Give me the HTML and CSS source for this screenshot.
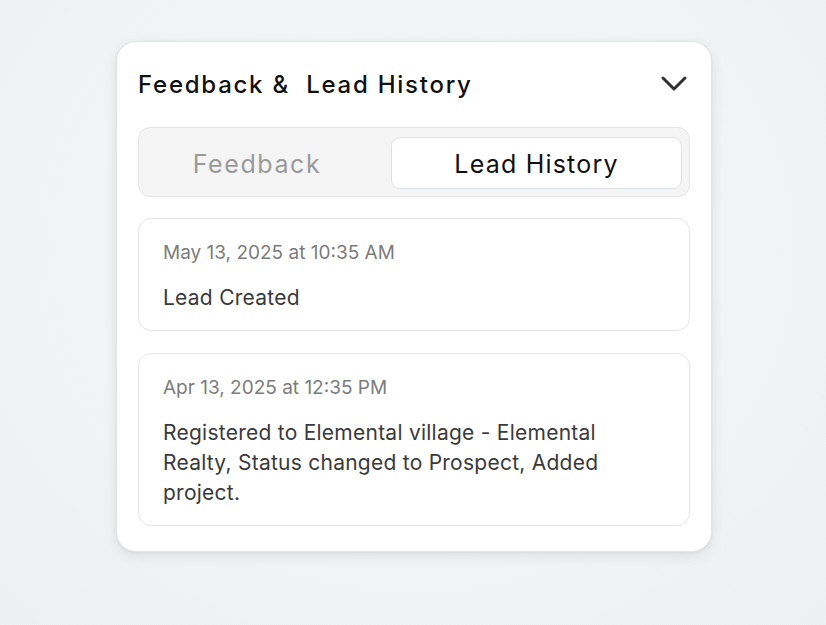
FILE: index.html
```html
<!DOCTYPE html>
<html>
<head>
<meta charset="utf-8">
<link rel="stylesheet" href="styles.css">
</head>
<body>
<div class="page">
  <section class="panel">
    <header class="panel-head">
      <h2 class="panel-title">Feedback &amp;&nbsp; Lead History</h2>
      <svg class="chevron" width="28" height="18" viewBox="0 0 28 18"><path d="M3 3 L14 14 L25 3" fill="none" stroke="#2f2f2f" stroke-width="3" stroke-linecap="round" stroke-linejoin="round"/></svg>
    </header>
    <div class="tabs">
      <div class="tab">Feedback</div>
      <div class="tab active">Lead History</div>
    </div>
    <div class="entries">
      <article class="entry">
        <div class="entry-date">May 13, 2025 at 10:35 AM</div>
        <div class="entry-text">Lead Created</div>
      </article>
      <article class="entry">
        <div class="entry-date">Apr 13, 2025 at 12:35 PM</div>
        <div class="entry-text">Registered to Elemental village - Elemental<br>Realty, Status changed to Prospect, Added<br>project.</div>
      </article>
    </div>
  </section>
</div>
</body>
</html>
```
FILE: styles.css
```css
* { box-sizing: border-box; }
html, body { margin: 0; padding: 0; }
body {
  width: 826px;
  height: 625px;
  background: radial-gradient(ellipse at 50% 40%, #f6f7f8 0%, #f1f2f3 70%, #eeeff0 100%);
  font-family: "Inter", "Liberation Sans", sans-serif;
  overflow: hidden;
}
.page {
  padding: 41px 0 0 116px;
}
.panel {
  width: 596px;
  background: #fff;
  border: 1px solid #e2e3e5;
  border-radius: 20px;
  box-shadow: 0 4px 14px rgba(0,0,0,0.08), 0 1px 3px rgba(0,0,0,0.05);
  padding: 22px 21px 25px 21px;
}
.panel-head {
  height: 40px;
  display: flex;
  align-items: center;
  justify-content: space-between;
}
.panel-title {
  margin: 0;
  font-family: "Inter", sans-serif;
  font-weight: 500;
  font-size: 24px;
  color: #111;
  letter-spacing: 1.75px;
}
.chevron { margin-right: 2px; }
.tabs {
  margin-top: 23px;
  height: 70px;
  border: 1px solid #e4e5e7;
  background: #f5f5f5;
  border-radius: 12px;
  padding: 9px 7px 7px 0;
  display: grid;
  grid-template-columns: 1fr 291px;
  column-gap: 16px;
}
.tab {
  display: flex;
  align-items: center;
  justify-content: center;
  padding-top: 1px;
  font-size: 25px;
  color: #9a9a9a;
  font-weight: 400;
  letter-spacing: 1.2px;
  border-radius: 9px;
}
.tab:first-child { letter-spacing: 1.6px; }
.tab.active {
  background: #fff;
  border: 1px solid #dfe1e4;
  color: #111;
}
.entries {
  margin-top: 21px;
  display: flex;
  flex-direction: column;
  gap: 22px;
}
.entry {
  border: 1.5px solid #e3e5e8;
  border-radius: 13px;
  padding: 22px 24px 17px 24px;
}
.entry-date {
  font-size: 19px;
  color: #7c7c7c;
  line-height: 24px;
}
.entry-text {
  margin-top: 18px;
  font-size: 21px;
  color: #3a3a3a;
  line-height: 30px;
  letter-spacing: 0.25px;
}
```
